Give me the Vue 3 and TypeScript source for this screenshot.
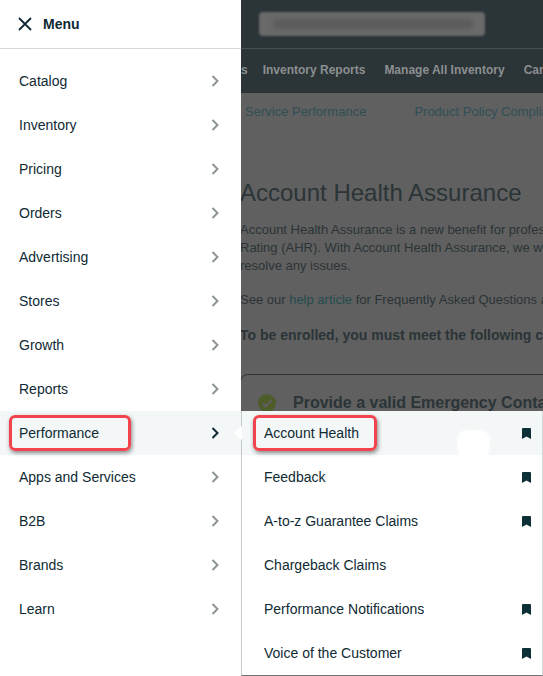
<template>
  <div class="page">
    <aside class="menu">
      <header class="menu__head">
        <svg class="menu__close" width="14" height="14" viewBox="0 0 14 14" fill="none" stroke="currentColor" stroke-width="1.8">
          <path d="M1 1l12 12M13 1L1 13" />
        </svg>
        <span class="menu__title">Menu</span>
      </header>
      <ul class="menu__list">
        <li
          v-for="item in menuItems"
          :key="item"
          class="menu__row"
          :class="{ 'menu__row--active': item === 'Performance' }"
        >
          <span>{{ item }}</span>
          <svg class="menu__chevron" width="8" height="12" viewBox="0 0 8 12" fill="none" stroke="currentColor" stroke-width="2">
            <path d="M1.5 1l5 5-5 5" />
          </svg>
        </li>
      </ul>
      <div class="mark mark--menu"></div>
    </aside>

    <main class="content">
      <div class="topbar">
        <div class="topbar__search"></div>
      </div>
      <nav class="nav">
        <span class="nav__cut">s</span>
        <span>Inventory Reports</span>
        <span>Manage All Inventory</span>
        <span>Campaign Manager</span>
      </nav>
      <div class="tabs">
        <span>Service Performance</span>
        <span>Product Policy Compliance</span>
      </div>
      <section class="body">
        <h1>Account Health Assurance</h1>
        <p>
          Account Health Assurance is a new benefit for professional sellers<br />
          Rating (AHR). With Account Health Assurance, we will work with you<br />
          resolve any issues.
        </p>
        <p>See our <a>help article</a> for Frequently Asked Questions about this program.</p>
        <p class="body__strong">To be enrolled, you must meet the following criteria:</p>
        <div class="card">
          <svg class="card__check" width="18" height="18" viewBox="0 0 18 18">
            <circle cx="9" cy="9" r="9" fill="#4e5c2a" />
            <path d="M4.5 9.2l3.2 3.2 5.8-6.2" fill="none" stroke="#5f5f5f" stroke-width="2.2" />
          </svg>
          <span class="card__title">Provide a valid Emergency Contact</span>
        </div>
      </section>
    </main>

    <div class="flyout">
      <span class="flyout__arrow"></span>
      <ul class="flyout__list">
        <li
          v-for="link in subItems"
          :key="link.label"
          class="flyout__row"
          :class="{ 'flyout__row--active': link.label === 'Account Health' }"
        >
          <span>{{ link.label }}</span>
          <svg v-if="link.saved" class="flyout__mark" width="9" height="11" viewBox="0 0 9 11" fill="currentColor">
            <path d="M1.2 0h6.6C8.5 0 9 .5 9 1.2V11L4.5 8.4 0 11V1.2C0 .5.5 0 1.2 0z" />
          </svg>
        </li>
      </ul>
      <div class="flyout__blob"></div>
      <div class="mark mark--flyout"></div>
    </div>
  </div>
</template>

<script setup lang="ts">
const menuItems = [
  'Catalog', 'Inventory', 'Pricing', 'Orders', 'Advertising', 'Stores', 'Growth',
  'Reports', 'Performance', 'Apps and Services', 'B2B', 'Brands', 'Learn',
];

const subItems = [
  { label: 'Account Health', saved: true },
  { label: 'Feedback', saved: true },
  { label: 'A-to-z Guarantee Claims', saved: true },
  { label: 'Chargeback Claims', saved: false },
  { label: 'Performance Notifications', saved: true },
  { label: 'Voice of the Customer', saved: true },
];
</script>

<style>
body {
  margin: 0;
  overflow: hidden;
}
</style>

<style scoped>
.page {
  position: relative;
  display: flex;
  width: 543px;
  height: 676px;
  overflow: hidden;
  font-family: "Liberation Sans", Arial, sans-serif;
  font-size: 14px;
  color: #0f2a33;
}
ul {
  list-style: none;
  margin: 0;
  padding: 0;
}

.menu {
  position: relative;
  flex: 0 0 241px;
  background: #fff;
}
.menu__head {
  display: flex;
  align-items: center;
  gap: 11px;
  height: 48px;
  padding-left: 18px;
  border-bottom: 1px solid #d5dbdb;
}
.menu__title {
  font-weight: 700;
}
.menu__list {
  padding-top: 10px;
}
.menu__row {
  display: flex;
  align-items: center;
  justify-content: space-between;
  height: 44px;
  padding: 0 22px 0 19px;
}
.menu__row--active {
  background: #f3f7f7;
}
.menu__chevron {
  color: #8d9596;
}
.menu__row--active .menu__chevron {
  color: #0f2a33;
}

.mark {
  position: absolute;
  box-sizing: border-box;
  height: 36px;
  border: 3px solid #f2434f;
  border-radius: 6px;
  box-shadow: 1px 2px 4px rgba(0, 0, 0, 0.45);
}
.mark--menu {
  top: 415px;
  left: 9px;
  width: 122px;
}
.mark--flyout {
  top: 4px;
  left: 11px;
  width: 124px;
}

.content {
  flex: 1;
  min-width: 0;
  background: #606060;
  overflow: hidden;
  white-space: nowrap;
}
.topbar {
  height: 49px;
  padding-top: 12px;
  box-sizing: border-box;
  background: #2b3437;
  border-bottom: 1px solid #474e50;
}
.topbar__search {
  position: relative;
  width: 226px;
  height: 24px;
  margin-left: 18px;
  border-radius: 4px;
  background: #6a6a6a;
  filter: blur(1px);
}
.topbar__search::after {
  content: "";
  position: absolute;
  inset: 7px 12px 7px 14px;
  background: #5c5c5c;
  filter: blur(2px);
}
.nav {
  display: flex;
  align-items: center;
  gap: 19px;
  height: 44px;
  box-sizing: border-box;
  padding-bottom: 2px;
  background: #2b3437;
  color: #8c8f90;
  font-size: 12px;
  font-weight: 700;
}
.nav__cut {
  margin-right: -4px;
}
.tabs {
  display: flex;
  gap: 48px;
  padding: 11px 0 0 4px;
  color: #2f4f55;
  font-size: 13px;
}
.body {
  margin-left: -1px;
  padding-top: 59px;
  color: #2b3437;
}
.body h1 {
  margin: 0 0 13px;
  font-size: 24px;
  font-weight: 400;
  line-height: 30px;
}
.body p {
  margin: 0 0 16px;
  font-size: 13px;
  line-height: 18px;
}
.body a {
  color: #244b4f;
}
.body .body__strong {
  margin-top: 17px;
  font-weight: 700;
  font-size: 14px;
}
.card {
  display: flex;
  align-items: center;
  gap: 17px;
  width: 400px;
  height: 120px;
  box-sizing: border-box;
  margin-top: 30px;
  padding: 0 17px 62px;
  border: 1px solid #2b3437;
  border-radius: 8px;
}
.card__check {
  flex-shrink: 0;
}
.card__title {
  font-size: 16px;
  font-weight: 700;
}

.flyout {
  position: absolute;
  top: 411px;
  left: 241px;
  right: 0;
  bottom: 0;
  box-sizing: border-box;
  background: #fff;
  border-left: 1px solid #c4c9c9;
  border-right: 1px solid #d5dbdb;
  border-bottom: 1px solid #6f7373;
}
.flyout__arrow {
  position: absolute;
  top: 17px;
  left: -6px;
  width: 10px;
  height: 10px;
  background: #fff;
  transform: rotate(45deg);
}
.flyout__row {
  position: relative;
  display: flex;
  align-items: center;
  justify-content: space-between;
  height: 44px;
  padding: 0 11px 0 22px;
}
.flyout__row--active {
  background: #f3f7f7;
}
.flyout__mark {
  color: #0d2f36;
}
.flyout__blob {
  position: absolute;
  top: 19px;
  left: 215px;
  width: 33px;
  height: 32px;
  border-radius: 30% 30% 45% 45%;
  background: #fff;
  filter: blur(1px);
}
</style>
